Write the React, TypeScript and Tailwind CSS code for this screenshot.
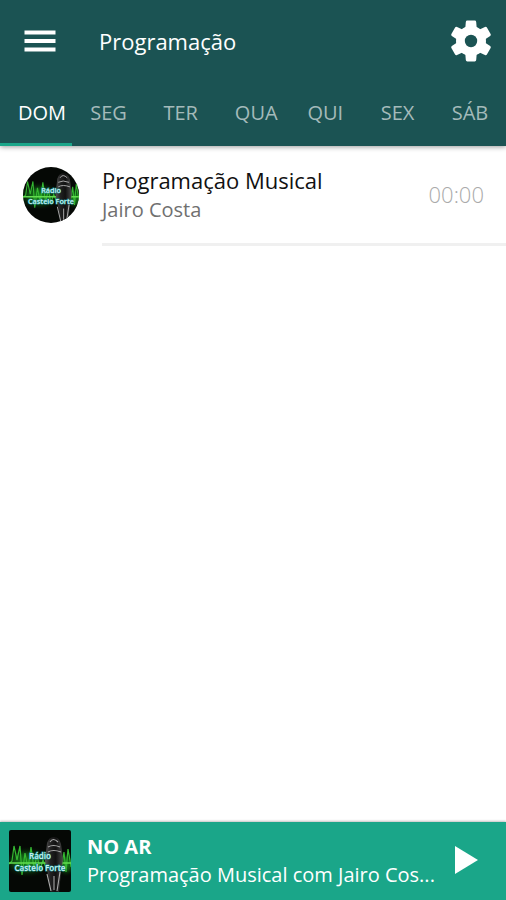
import { useState } from 'react'

const DAYS = ['DOM', 'SEG', 'TER', 'QUA', 'QUI', 'SEX', 'SÁB']

const PROGRAMS = [
  { title: 'Programação Musical', host: 'Jairo Costa', time: '00:00' },
]

const NOW_PLAYING = 'Programação Musical com Jairo Cos...'

function MenuIcon() {
  return (
    <svg viewBox="0 0 32 24" className="h-6 w-8" fill="currentColor" aria-hidden="true">
      <rect x="0.5" y="1.5" width="31" height="4" />
      <rect x="0.5" y="10" width="31" height="4" />
      <rect x="0.5" y="18.5" width="31" height="4" />
    </svg>
  )
}

function GearIcon() {
  return (
    <svg viewBox="0 0 42 42" className="h-[42px] w-[42px]" aria-hidden="true">
      <g fill="currentColor" stroke="currentColor" strokeWidth="3" strokeLinejoin="round">
        <circle cx="21" cy="21" r="13.5" />
        {[0, 60, 120, 180, 240, 300].map((angle) => (
          <path
            key={angle}
            d="M17.3 2h7.4l.5 6 2 3-6.2 8-6.2-8 2-3z"
            transform={`rotate(${angle} 21 21)`}
          />
        ))}
      </g>
      <circle cx="21" cy="21" r="6.2" fill="#1b5353" />
    </svg>
  )
}

function StationLogo({ className }: { className: string }) {
  return (
    <svg viewBox="0 0 62 62" className={className} role="img" aria-label="Rádio Castelo Forte">
      <defs>
        <radialGradient id="glow">
          <stop offset="0" stopColor="#1fa01f" stopOpacity="0.9" />
          <stop offset="0.5" stopColor="#14701a" stopOpacity="0.7" />
          <stop offset="1" stopColor="#041004" stopOpacity="0" />
        </radialGradient>
        <linearGradient id="mic" x1="0" x2="1">
          <stop offset="0" stopColor="#555" />
          <stop offset="0.3" stopColor="#222" />
          <stop offset="0.6" stopColor="#111" />
          <stop offset="1" stopColor="#4a4a4a" />
        </linearGradient>
      </defs>
      <rect width="62" height="62" fill="#050805" />
      <ellipse cx="18" cy="32" rx="25" ry="16" fill="url(#glow)" />
      <ellipse cx="57" cy="34" rx="10" ry="13" fill="url(#glow)" />
      <path
        d="M0 34l3-3 2-15 3 14 3-14 2 29 3-22 3 16 3-22 3 22 3-14 3 15 3-10 3 8 3-6M53 35l2-13 2 20 2-23 3 18"
        fill="none"
        stroke="#35b832"
        strokeWidth="1.2"
      />
      <path d="M0 33h62" stroke="#62dd50" strokeWidth="1.6" />
      <path d="M38 13q2-6 7-6t7 7l2 16-2 12-2 20h-8l-3-18-3-13z" fill="url(#mic)" />
      <path
        d="M41 12q3-5 8 0M39 17q5-3 12 0M39 22q5-3 13 0M38 44l4 17M51 42l-3 19M45 46v14"
        fill="none"
        stroke="#a8a8a8"
        strokeWidth="1.1"
      />
      <g
        fill="#c8f2ee"
        stroke="#1f8f95"
        strokeWidth="1"
        paintOrder="stroke"
        textAnchor="middle"
        className="font-['Open_Sans',sans-serif] text-[8px] font-semibold"
      >
        <text x="31" y="29">Rádio</text>
        <text x="31" y="41">Castelo Forte</text>
      </g>
    </svg>
  )
}

export default function App() {
  const [day, setDay] = useState('DOM')

  return (
    <div className="flex min-h-screen flex-col bg-white font-['Open_Sans',sans-serif]">
      <header className="bg-[#1b5353] text-white shadow-[0_1px_5px_rgba(0,0,0,0.4)]">
        <div className="flex h-[82px] items-center pr-3.5 pl-6">
          <button type="button" aria-label="Menu">
            <MenuIcon />
          </button>
          <h1 className="ml-[43px] flex-1 text-[22px] leading-7">Programação</h1>
          <button type="button" aria-label="Configurações">
            <GearIcon />
          </button>
        </div>
        <nav className="flex h-16">
          {DAYS.map((d) => (
            <button
              key={d}
              type="button"
              onClick={() => setDay(d)}
              className={
                d === day
                  ? 'min-w-0 flex-1 border-b-[3px] border-[#1aa689] px-[18px] text-xl text-white'
                  : 'min-w-0 flex-1 border-b-[3px] border-transparent px-[18px] text-xl text-[#a4baba]'
              }
            >
              <span className="block whitespace-nowrap">{d}</span>
            </button>
          ))}
        </nav>
      </header>

      <main className="flex-1">
        <ul>
          {PROGRAMS.map((p) => (
            <li key={p.title} className="flex items-stretch pl-[23px]">
              <StationLogo className="mt-[21px] h-14 w-14 shrink-0 rounded-full" />
              <div className="ml-[23px] flex h-[100px] flex-1 border-b-[3px] border-[#f0f0f0] pr-[22px]">
                <div className="flex-1 pt-5">
                  <h2 className="text-[22px] leading-7 text-[#111]">{p.title}</h2>
                  <p className="text-xl leading-8 text-[#707070]">{p.host}</p>
                </div>
                <time className="self-center text-[22px] font-light text-[#aaa]">{p.time}</time>
              </div>
            </li>
          ))}
        </ul>
      </main>

      <footer className="flex h-[78px] items-center bg-[#1aa689] pr-6 pl-[9px] text-white shadow-[0_-1px_2px_rgba(0,0,0,0.25)]">
        <StationLogo className="h-[62px] w-[62px] shrink-0 rounded-xs" />
        <div className="ml-4 min-w-0 flex-1 pr-3">
          <p className="text-xl leading-7 font-bold">NO AR</p>
          <p className="truncate text-xl leading-7">{NOW_PLAYING}</p>
        </div>
        <button type="button" aria-label="Tocar">
          <svg viewBox="0 0 28 30" className="h-[30px] w-7" fill="currentColor" aria-hidden="true">
            <path d="M1 0v28l23-14z" />
          </svg>
        </button>
      </footer>
    </div>
  )
}
